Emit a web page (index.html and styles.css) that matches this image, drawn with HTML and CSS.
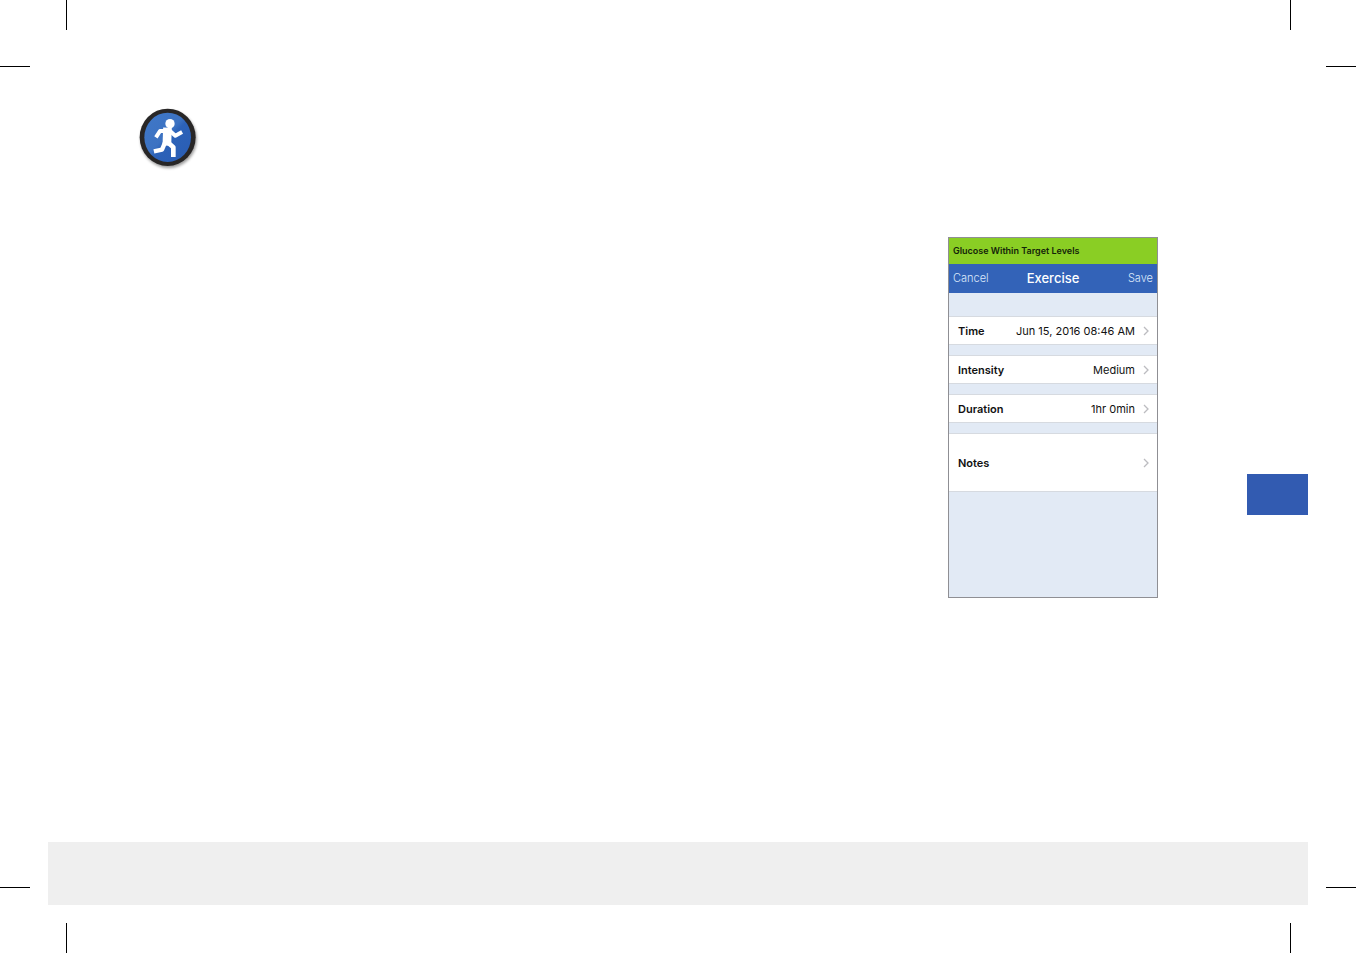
FILE: index.html
```html
<!DOCTYPE html>
<html lang="en">
<head>
<meta charset="utf-8">
<title>Exercise</title>
<link rel="stylesheet" href="styles.css">
</head>
<body>
<div class="sheet">
  <div class="crop crop-top crop-left" aria-hidden="true"></div>
  <div class="crop crop-top crop-right" aria-hidden="true"></div>
  <div class="crop crop-bottom crop-left" aria-hidden="true"></div>
  <div class="crop crop-bottom crop-right" aria-hidden="true"></div>

  <main class="content">
    <svg class="badge" viewBox="0 0 228 228" role="img" aria-label="Exercise">
      <defs>
        <linearGradient id="disc" x1="0" y1="0" x2="1" y2="1">
          <stop offset="0" stop-color="#3f78c8"/>
          <stop offset="0.46" stop-color="#3c72c2"/>
          <stop offset="0.54" stop-color="#2c62b8"/>
          <stop offset="1" stop-color="#2a5db4"/>
        </linearGradient>
        <filter id="soft" x="-20%" y="-20%" width="140%" height="140%">
          <feGaussianBlur stdDeviation="4"/>
        </filter>
      </defs>
      <ellipse cx="116" cy="118" rx="84" ry="86" fill="#000" opacity="0.4" filter="url(#soft)"/>
      <ellipse cx="113" cy="112" rx="84" ry="86" fill="#282626"/>
      <ellipse cx="113" cy="112" rx="70" ry="74" fill="url(#disc)"/>
      <circle cx="120" cy="71" r="14" fill="#fff"/>
      <g fill="none" stroke="#fff" stroke-linejoin="round" stroke-linecap="square">
        <path d="M112 96L111 124" stroke-width="26"/>
        <path d="M108 93L90 93L81 107" stroke-width="12"/>
        <path d="M120 93L136 107L151 99" stroke-width="12"/>
        <path d="M104 130L96 149L78 153" stroke-width="13"/>
        <path d="M113 127L130 142L130 164" stroke-width="14"/>
      </g>
    </svg>

    <section class="phone">
      <p class="status">Glucose Within Target Levels</p>
      <header class="navbar">
        <button class="action" type="button">Cancel</button>
        <h1 class="title">Exercise</h1>
        <button class="action action-end" type="button">Save</button>
      </header>
      <div class="fields">
        <button class="field" type="button">
          <span class="label">Time</span><span class="value">Jun 15, 2016 08:46 AM</span>
          <svg class="chevron" viewBox="0 0 6 10"><path d="M1 1L5 5L1 9"/></svg>
        </button>
        <button class="field" type="button">
          <span class="label">Intensity</span><span class="value">Medium</span>
          <svg class="chevron" viewBox="0 0 6 10"><path d="M1 1L5 5L1 9"/></svg>
        </button>
        <button class="field" type="button">
          <span class="label">Duration</span><span class="value">1hr 0min</span>
          <svg class="chevron" viewBox="0 0 6 10"><path d="M1 1L5 5L1 9"/></svg>
        </button>
        <button class="field field-tall" type="button">
          <span class="label">Notes</span><span class="value"></span>
          <svg class="chevron" viewBox="0 0 6 10"><path d="M1 1L5 5L1 9"/></svg>
        </button>
      </div>
    </section>

    <div class="tab"></div>
  </main>
  <footer class="footer"></footer>
</div>
</body>
</html>
```

FILE: styles.css
```css
* {
  box-sizing: border-box;
}

body {
  margin: 0;
  background: #fff;
  color: #111;
  font-family: Inter, "Liberation Sans", sans-serif;
}

.sheet {
  position: relative;
  display: flex;
  flex-direction: column;
  min-height: 100vh;
  padding: 0 48px 48px;
}

/* Printer's crop marks in the sheet corners */
.crop {
  position: absolute;
  width: 67px;
  height: 67px;
  background:
    linear-gradient(#000, #000) var(--v-pos) / 1px 30px no-repeat,
    linear-gradient(#000, #000) var(--h-pos) / 30px 1px no-repeat;
}

.crop-top { top: 0; }
.crop-bottom { bottom: 0; height: 66px; }
.crop-left { left: 0; }
.crop-right { right: 0; width: 66px; }
.crop-top.crop-left { --v-pos: right top; --h-pos: left bottom; }
.crop-top.crop-right { --v-pos: left top; --h-pos: right bottom; }
.crop-bottom.crop-left { --v-pos: right bottom; --h-pos: left top; }
.crop-bottom.crop-right { --v-pos: left bottom; --h-pos: right top; }

.content {
  flex: 1;
  display: flex;
  align-items: flex-start;
  padding: 100px 0 0 82px;
}

.badge {
  width: 76px;
  height: 76px;
}

.phone {
  display: flex;
  flex-direction: column;
  width: 210px;
  min-height: 361px;
  margin: 137px 89px 0 auto;
  border: 1px solid #8f8f94;
  background: #e2eaf5;
}

.status {
  margin: 0;
  padding: 0 4px;
  background: #8ace24;
  color: #14240a;
  font-size: 9px;
  font-weight: 600;
  line-height: 26px;
}

.navbar {
  display: grid;
  grid-template-columns: 1fr auto 1fr;
  align-items: center;
  padding: 0 4px;
  background: #3363b8;
  color: #fff;
  line-height: 29px;
}

.title {
  margin: 0;
  font-size: 13px;
  font-weight: 500;
}

.action {
  padding: 0;
  border: 0;
  background: none;
  color: #dce8fa;
  font: inherit;
  font-size: 11px;
  font-weight: 300;
  text-align: left;
}

.action-end {
  text-align: right;
}

.fields {
  display: flex;
  flex-direction: column;
  gap: 10px;
  padding-top: 23px;
}

.field {
  display: flex;
  align-items: center;
  min-height: 29px;
  padding: 0 8px 0 9px;
  border: solid #d6dae0;
  border-width: 1px 0;
  background: #fff;
  color: #111;
  font: inherit;
  font-size: 11px;
}

.field-tall {
  min-height: 59px;
}

.label {
  font-weight: 600;
}

.value {
  margin-left: auto;
}

.chevron {
  width: 6px;
  height: 10px;
  margin-left: 8px;
  fill: none;
  stroke: #bcbcc0;
  stroke-width: 1.3;
}

.tab {
  width: 61px;
  height: 41px;
  margin-top: 374px;
  background: #325bb1;
}

.footer {
  min-height: 63px;
  background: #efefef;
}
```
